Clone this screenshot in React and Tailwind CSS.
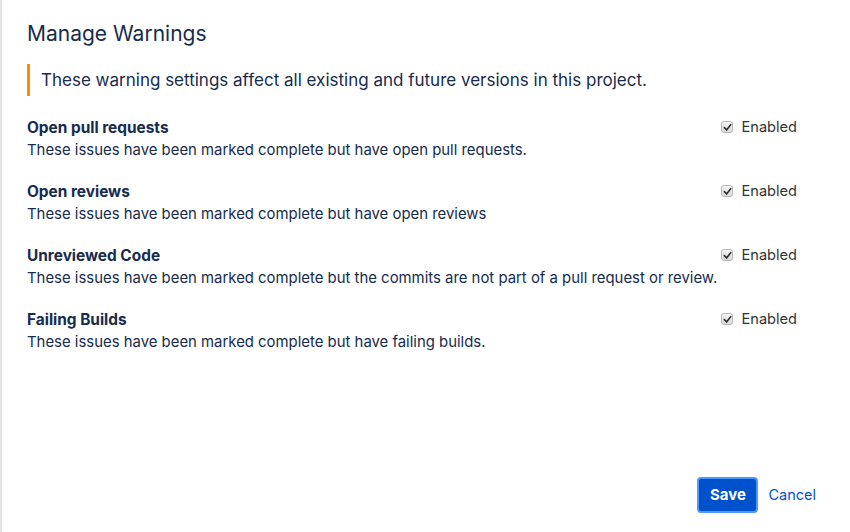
import React from "react";

const rows = [
  ["Open pull requests", "These issues have been marked complete but have open pull requests."],
  ["Open reviews", "These issues have been marked complete but have open reviews"],
  ["Unreviewed Code", "These issues have been marked complete but the commits are not part of a pull request or review."],
  ["Failing Builds", "These issues have been marked complete but have failing builds."],
];

function Check() {
  return (
    <span className="w-[12px] h-[12px] rounded-[3px] border border-[#b5b5b5] bg-gradient-to-b from-[#f4f4f4] to-[#dcdcdc] flex items-center justify-center">
      <svg width="9" height="9" viewBox="0 0 10 10">
        <path d="M1.5 5.2 L4 7.8 L8.6 1.8" fill="none" stroke="#2a2a2a" strokeWidth="1.8" strokeLinecap="round" strokeLinejoin="round" />
      </svg>
    </span>
  );
}

export default function App() {
  return (
    <div className="w-[850px] h-[532px] bg-white border-l-2 border-[#e4e4e4] flex flex-col text-[#172B4D]" style={{ fontFamily: 'Inter, "Liberation Sans", Arial, sans-serif' }}>
      <div className="pl-[25px] pr-[52px] flex-1 flex flex-col">
        <h1 className="text-[21px] leading-[24px] mt-[22px]">Manage Warnings</h1>
        <div className="mt-[18px] border-l-[3px] border-[#ff8b00] pl-[11px] py-[5px] text-[17px] leading-[22px]">
          These warning settings affect all existing and future versions in this project.
        </div>
        <div className="mt-[20px] flex flex-col gap-[19px]">
          {rows.map(([t, d]) => (
            <div key={t} className="flex justify-between">
              <div>
                <div className="font-bold text-[15.4px] leading-[22px] pt-[1px]">{t}</div>
                <div className="text-[14.9px] leading-[21px] mt-[1px]">{d}</div>
              </div>
              <div className="flex items-start gap-[8px] pt-[3px] text-[#333] text-[14.6px] leading-[16px] mr-[1px]">
                <span className="mt-[2px]"><Check /></span>
                <span>Enabled</span>
              </div>
            </div>
          ))}
        </div>
        <div className="mt-auto mb-[19px] flex justify-end items-center gap-[10px] mr-[-18px]">
          <button className="h-[36px] w-[61px] rounded-[4px] bg-[#0052CC] text-white font-bold text-[15px] border-2 border-[#4c9aff]">Save</button>
          <span className="text-[#0052CC] text-[14.5px]">Cancel</span>
        </div>
      </div>
    </div>
  );
}
